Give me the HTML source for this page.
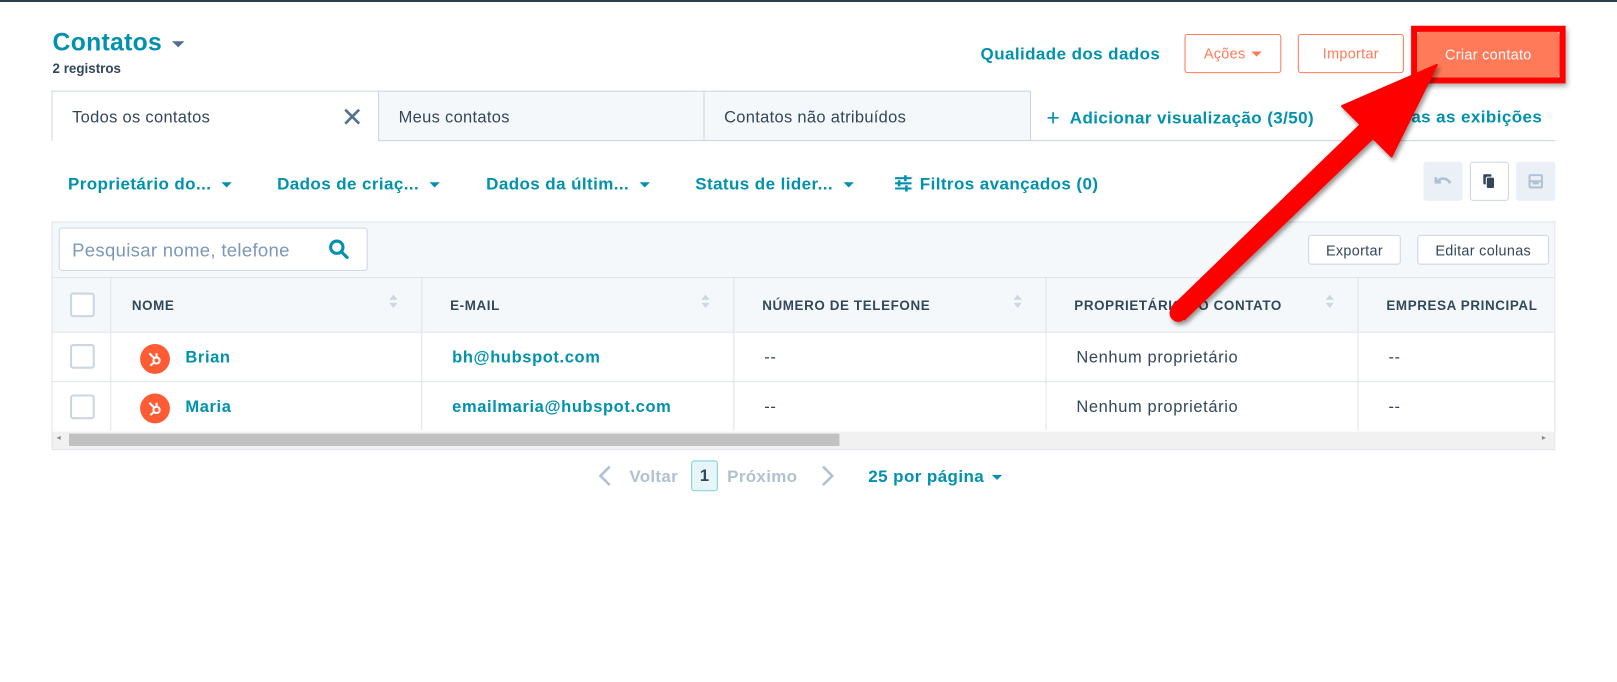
<!DOCTYPE html>
<html><head><meta charset="utf-8"><style>
*{box-sizing:border-box;margin:0;padding:0}
body{width:1617px;height:681px;overflow:hidden;background:#fff;font-family:"Liberation Sans",sans-serif;color:#33475b;position:relative}
#w{position:absolute;left:0;top:0;width:1570px;height:662px;transform:scale(1.03);transform-origin:0 0}
.a{position:absolute;white-space:nowrap}
.t{color:#0091ae;font-weight:bold;letter-spacing:.4px}
.car{display:inline-block;width:0;height:0;border-left:5px solid transparent;border-right:5px solid transparent;border-top:5px solid #0091ae;vertical-align:middle;margin-left:8px}
.btn{position:absolute;border:1px solid #ff7a59;border-radius:3px;color:#ff7a59;font-size:14px;letter-spacing:.3px;display:flex;align-items:center;justify-content:center}
.tab{position:absolute;top:88px;height:49px;border:1px solid #cbd6e2;background:#f5f8fa;font-size:16px;letter-spacing:.3px;padding:17px 0 0 19px}
.ib{position:absolute;top:157px;width:38px;height:38px;border-radius:3px;background:#eaf0f6;display:flex;align-items:center;justify-content:center}
.cb{position:absolute;left:17px;width:24px;height:24px;border:2px solid #cbd6e2;border-radius:3px;background:#fff}
.hd{position:absolute;top:289px;font-size:13px;font-weight:bold;letter-spacing:.6px;color:#33475b}
.vl{position:absolute;width:1px;background:#dfe3eb}
.hl{position:absolute;height:1px;background:#dfe3eb}
.cell{position:absolute;font-size:16px;letter-spacing:.6px}
.sort{position:absolute;top:286px;width:0;height:0}
.sort:before{content:"";position:absolute;left:-4px;top:0;border-left:4px solid transparent;border-right:4px solid transparent;border-bottom:5px solid #cbd6e2}
.sort:after{content:"";position:absolute;left:-4px;top:8px;border-left:4px solid transparent;border-right:4px solid transparent;border-top:5px solid #cbd6e2}
.av{position:absolute;left:85px;width:29px;height:29px;border-radius:50%;background:#ff5c35}
</style></head><body>
<div style="position:absolute;left:0;top:0;width:1617px;height:2px;background:#2d3e50"></div>
<div id="w">
<div class="a t" style="left:51px;top:28px;font-size:24px;letter-spacing:.3px">Contatos<span class="car" style="border-width:6px 6px 0 6px;margin-left:10px;border-top-color:#516f90"></span></div>
<div class="a" style="left:51px;top:59px;font-size:13px;font-weight:bold">2 registros</div>
<div class="a t" style="left:952px;top:44px;font-size:16.5px">Qualidade dos dados</div>
<div class="btn" style="left:1150px;top:33px;width:94px;height:38px">Ações<span class="car" style="border-top-color:#ff7a59;margin-left:6px"></span></div>
<div class="btn" style="left:1260px;top:33px;width:103px;height:38px">Importar</div>
<div style="position:absolute;left:1370px;top:25px;width:150px;height:56px;border:6px solid #f00;box-shadow:2px 3px 5px rgba(0,0,0,.35)"></div>
<div class="btn" style="left:1376px;top:31px;width:138px;height:44px;background:#ff7a59;color:#fff;border-color:#ff7a59">Criar contato</div>

<div class="tab" style="left:50px;width:318px;background:#fff;border-bottom:none">Todos os contatos<span style="position:absolute;right:14px;top:10px;font-size:26px;color:#516f90;font-weight:normal">✕</span></div>
<div class="tab" style="left:367px;width:317px">Meus contatos</div>
<div class="tab" style="left:683px;width:318px">Contatos não atribuídos</div>
<div class="hl" style="left:1000px;top:136px;width:510px;background:#cbd6e2"></div>
<div class="a t" style="left:1016px;top:102px;font-size:16.5px"><span style="font-size:22px;font-weight:normal;vertical-align:-2px">+</span>&nbsp; Adicionar visualização (3/50)</div>
<div class="a t" style="left:1340px;top:105px;font-size:16.5px">Todas as exibições</div>

<div class="a t" style="left:66px;top:170px;font-size:16.5px">Proprietário do...<span class="car" style="margin-left:10px"></span></div>
<div class="a t" style="left:269px;top:170px;font-size:16.5px">Dados de criaç...<span class="car" style="margin-left:10px"></span></div>
<div class="a t" style="left:472px;top:170px;font-size:16.5px">Dados da últim...<span class="car" style="margin-left:10px"></span></div>
<div class="a t" style="left:675px;top:170px;font-size:16.5px">Status de lider...<span class="car" style="margin-left:10px"></span></div>
<svg class="a" style="left:868px;top:170px" width="18" height="16" viewBox="0 0 18 16" fill="none" stroke="#0091ae" stroke-width="2"><path d="M1 3h16M1 8h16M1 13h16"/><path d="M11 0v6M5 5v6M12 10v6" stroke-width="2.5"/></svg>
<div class="a t" style="left:893px;top:170px;font-size:16.5px">Filtros avançados (0)</div>
<div class="ib" style="left:1382px"><svg width="18" height="12" viewBox="0 0 18 12" fill="none" stroke="#b0c1d4" stroke-width="2.5"><path d="M2 2v5h5M3 7c3-5 10-5 13 1"/></svg></div>
<div class="ib" style="left:1427px;background:#fff;border:1px solid #cbd6e2"><svg width="12" height="14" viewBox="0 0 12 14"><rect x="0" y="0" width="8" height="10" rx="1" fill="#33475b"/><rect x="3" y="3" width="8" height="11" rx="1.5" fill="#33475b" stroke="#fff" stroke-width="1"/></svg></div>
<div class="ib" style="left:1472px"><svg width="14" height="14" viewBox="0 0 14 14" fill="none" stroke="#b0c1d4" stroke-width="2"><rect x="1" y="1" width="12" height="12" rx="1"/><path d="M4 9h6M1 7h12"/></svg></div>

<div style="position:absolute;left:50px;top:215px;width:1460px;height:222px;border:1px solid #dfe3eb;background:#fff"></div>
<div style="position:absolute;left:51px;top:216px;width:1458px;height:106px;background:#f5f8fa"></div>
<div style="position:absolute;left:57px;top:221px;width:300px;height:42px;border:1px solid #cbd6e2;border-radius:3px;background:#fff;font-size:18px;letter-spacing:.3px;color:#7c98b6;padding:11px 0 0 12px">Pesquisar nome, telefone</div>
<svg class="a" style="left:319px;top:232px" width="20" height="20" viewBox="0 0 20 20" fill="none" stroke="#0091ae" stroke-width="3"><circle cx="8" cy="8" r="6"/><path d="M12.5 12.5l5.5 5.5" stroke-linecap="round"/></svg>
<div class="btn" style="left:1270px;top:228px;width:90px;height:29px;border-color:#cbd6e2;background:#fff;color:#33475b">Exportar</div>
<div class="btn" style="left:1376px;top:228px;width:128px;height:29px;border-color:#cbd6e2;background:#fff;color:#33475b">Editar colunas</div>
<div class="hl" style="left:51px;top:269px;width:1458px"></div>
<div class="hl" style="left:51px;top:322px;width:1458px"></div>
<div class="hl" style="left:51px;top:370px;width:1458px"></div>
<div class="vl" style="left:107px;top:269px;height:149px"></div>
<div class="vl" style="left:409px;top:269px;height:149px"></div>
<div class="vl" style="left:712px;top:269px;height:149px"></div>
<div class="vl" style="left:1015px;top:269px;height:149px"></div>
<div class="vl" style="left:1318px;top:269px;height:149px"></div>
<div class="cb" style="left:68px;top:284px"></div>
<div class="cb" style="left:68px;top:334px"></div>
<div class="cb" style="left:68px;top:383px"></div>
<div class="hd" style="left:128px">NOME</div><div class="sort" style="left:382px"></div>
<div class="hd" style="left:437px">E-MAIL</div><div class="sort" style="left:685px"></div>
<div class="hd" style="left:740px">NÚMERO DE TELEFONE</div><div class="sort" style="left:988px"></div>
<div class="hd" style="left:1043px">PROPRIETÁRIO DO CONTATO</div><div class="sort" style="left:1291px"></div>
<div class="hd" style="left:1346px">EMPRESA PRINCIPAL</div>
<div class="av" style="left:136px;top:334px"></div>
<div class="av" style="left:136px;top:382px"></div>
<svg class="a" style="left:142px;top:340px" width="17" height="17" viewBox="0 0 17 17" fill="none" stroke="#fff" stroke-width="2"><circle cx="10" cy="10" r="3"/><path d="M10 7V3M8 8L3 3M7.5 12L4 15"/></svg>
<svg class="a" style="left:142px;top:388px" width="17" height="17" viewBox="0 0 17 17" fill="none" stroke="#fff" stroke-width="2"><circle cx="10" cy="10" r="3"/><path d="M10 7V3M8 8L3 3M7.5 12L4 15"/></svg>
<div class="cell t" style="left:180px;top:339px">Brian</div>
<div class="cell t" style="left:180px;top:387px">Maria</div>
<div class="cell t" style="left:439px;top:339px">bh@hubspot.com</div>
<div class="cell t" style="left:439px;top:387px">emailmaria@hubspot.com</div>
<div class="cell" style="left:742px;top:339px">--</div>
<div class="cell" style="left:742px;top:387px">--</div>
<div class="cell" style="left:1045px;top:339px">Nenhum proprietário</div>
<div class="cell" style="left:1045px;top:387px">Nenhum proprietário</div>
<div class="cell" style="left:1348px;top:339px">--</div>
<div class="cell" style="left:1348px;top:387px">--</div>
<div style="position:absolute;left:51px;top:419px;width:1458px;height:17px;background:#f1f1f1"></div>
<div style="position:absolute;left:67px;top:421px;width:748px;height:12px;background:#c1c1c1"></div>
<div class="a" style="left:55px;top:420px;font-size:8px;color:#888">◂</div>
<div class="a" style="left:1497px;top:420px;font-size:8px;color:#888">▸</div>

<svg class="a" style="left:580px;top:451px" width="14" height="22" viewBox="0 0 14 22" fill="none" stroke="#b0c1d4" stroke-width="2.5"><path d="M12 2L3 11l9 9"/></svg>
<div class="a" style="left:611px;top:454px;font-size:16.5px;font-weight:bold;letter-spacing:.3px;color:#b0c1d4">Voltar</div>
<div style="position:absolute;left:671px;top:447px;width:26px;height:30px;border:1px solid #7fd1de;background:#e5f5f8;border-radius:3px;font-size:16px;font-weight:bold;text-align:center;padding-top:6px">1</div>
<div class="a" style="left:706px;top:454px;font-size:16.5px;font-weight:bold;letter-spacing:.3px;color:#b0c1d4">Próximo</div>
<svg class="a" style="left:797px;top:451px" width="14" height="22" viewBox="0 0 14 22" fill="none" stroke="#b0c1d4" stroke-width="2.5"><path d="M2 2l9 9-9 9"/></svg>
<div class="a t" style="left:843px;top:454px;font-size:16.5px">25 por página<span class="car"></span></div>

<svg class="a" style="left:0;top:0;overflow:visible" width="1570" height="662"><defs><filter id="s"><feDropShadow dx="2" dy="3" stdDeviation="2" flood-opacity=".4"/></filter></defs>
<g filter="url(#s)"><polygon points="1138,298 1321,121 1303,103 1395,63 1351,152 1333,134 1150,310" fill="#f00" stroke="#f00" stroke-width="2" stroke-linejoin="round"/><circle cx="1144" cy="304" r="8.5" fill="#f00"/></g></svg>
</div>
</body></html>
